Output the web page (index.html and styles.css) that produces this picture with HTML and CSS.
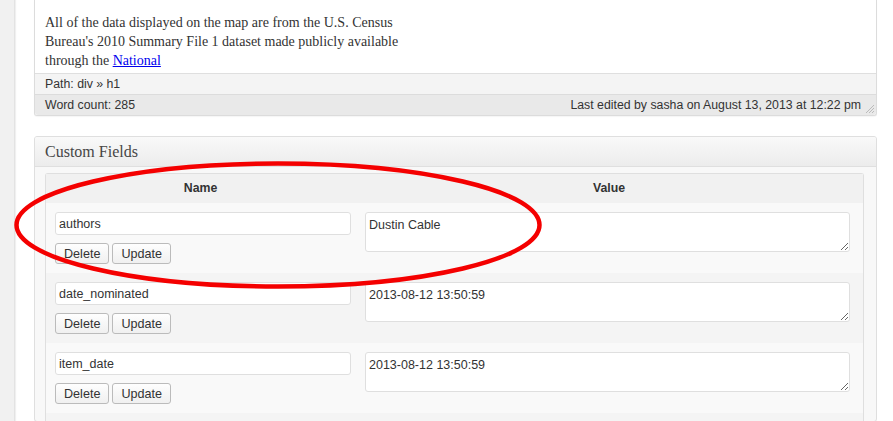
FILE: index.html
```html
<!DOCTYPE html>
<html lang="en">
<head>
<meta charset="utf-8">
<title>Edit Post – Custom Fields</title>
<link rel="stylesheet" href="styles.css">
</head>
<body>
<div class="layout">
  <aside class="sidebar"></aside>
  <main class="main">
    <div class="editor">
      <div class="editor-content">
        <p>All of the data displayed on the map are from the U.S. Census<br>Bureau's 2010 Summary File 1 dataset made publicly available<br>through the <a href="#">National</a></p>
      </div>
      <div class="path-bar">Path: div » h1</div>
      <div class="status-bar">
        <span>Word count: 285</span>
        <span class="last-edit">Last edited by sasha on August 13, 2013 at 12:22 pm</span>
        <svg class="grip" width="10" height="10" viewBox="0 0 10 10"><path d="M9 1L1 9M9 4L4 9M9 7L7 9" stroke="#bbb" stroke-width="1" fill="none"/></svg>
      </div>
    </div>

    <div class="postbox">
      <h3 class="postbox-title">Custom Fields</h3>
      <div class="postbox-inside">
        <div class="meta-table">
          <div class="meta-head">
            <div class="col-name">Name</div>
            <div class="col-value">Value</div>
          </div>
          <div class="meta-row">
            <div class="cell-name">
              <input class="field" type="text" value="authors">
              <div class="buttons"><button class="btn">Delete</button><button class="btn">Update</button></div>
            </div>
            <div class="cell-value"><textarea class="area">Dustin Cable</textarea></div>
          </div>
          <div class="meta-row alt">
            <div class="cell-name">
              <input class="field" type="text" value="date_nominated">
              <div class="buttons"><button class="btn">Delete</button><button class="btn">Update</button></div>
            </div>
            <div class="cell-value"><textarea class="area">2013-08-12 13:50:59</textarea></div>
          </div>
          <div class="meta-row">
            <div class="cell-name">
              <input class="field" type="text" value="item_date">
              <div class="buttons"><button class="btn">Delete</button><button class="btn">Update</button></div>
            </div>
            <div class="cell-value"><textarea class="area">2013-08-12 13:50:59</textarea></div>
          </div>
          <div class="meta-row alt tail"></div>
        </div>
      </div>
    </div>
  </main>
</div>
<svg class="annotation" width="893" height="421" viewBox="0 0 893 421">
  <ellipse cx="278" cy="225" rx="261.5" ry="61.5" fill="none" stroke="#f40000" stroke-width="4.5"/>
</svg>
</body>
</html>
```

FILE: styles.css
```css
html, body {
  margin: 0;
  padding: 0;
  background: #fff;
  height: 421px;
  overflow: hidden;
}

body {
  font-family: "Liberation Sans", Arial, sans-serif;
  font-size: 12px;
  color: #333;
  position: relative;
}

.layout {
  display: flex;
  height: 421px;
}

.sidebar {
  width: 14px;
  flex: 0 0 14px;
  background: #f1f1f1;
  border-right: 1px solid #e3e3e3;
  box-shadow: 1px 0 1px rgba(0, 0, 0, 0.06);
}

.main {
  flex: 1;
  padding: 0 16px 0 19px;
}

/* Editor */
.editor {
  border: 1px solid #dcdcdc;
  border-top: none;
  border-radius: 0 0 3px 3px;
  background: #fff;
  box-shadow: 0 1px 1px rgba(0, 0, 0, 0.04);
}

.editor-content {
  padding: 13px 10px 3px 10px;
}

.editor-content p {
  margin: 0;
  font-family: "Liberation Serif", "Times New Roman", serif;
  font-size: 14px;
  line-height: 19px;
  color: #333;
}

.editor-content a {
  color: #0000ee;
}

.path-bar {
  border-top: 1px solid #dfdfdf;
  background: #f4f4f4;
  height: 20px;
  line-height: 20px;
  padding: 0 10px;
  font-size: 12.3px;
  color: #333;
}

.status-bar {
  display: flex;
  align-items: center;
  border-top: 1px solid #dcdcdc;
  background: #e9e9e9;
  height: 20px;
  padding: 0 1px 0 10px;
  border-radius: 0 0 3px 3px;
  font-size: 12.3px;
}

.last-edit {
  margin-left: auto;
}

.grip {
  margin-left: 4px;
  align-self: flex-end;
  margin-bottom: 1px;
}

/* Postbox */
.postbox {
  margin-top: 20px;
  border: 1px solid #dfdfdf;
  border-radius: 3px;
  background: #f8f8f8;
  overflow: hidden;
}

.postbox-title {
  margin: 0;
  height: 29px;
  line-height: 30px;
  padding: 0 10px;
  font-family: "Liberation Serif", "Times New Roman", serif;
  font-weight: normal;
  font-size: 16px;
  color: #464646;
  background: linear-gradient(#f9f9f9, #ececec);
  border-bottom: 1px solid #dfdfdf;
}

.postbox-inside {
  padding: 6px 12px 0 10px;
}

.meta-table {
  border: 1px solid #dfdfdf;
  border-bottom: none;
  border-radius: 3px 3px 0 0;
}

.meta-head {
  display: grid;
  grid-template-columns: 309px 1fr;
  height: 29px;
  line-height: 29px;
  background: #f1f1f1;
  font-weight: bold;
  font-size: 12.3px;
  text-align: center;
  color: #333;
}

.meta-row {
  display: grid;
  grid-template-columns: 309px 1fr;
  height: 70px;
  background: #f9f9f9;
}

.meta-row.alt {
  background: #f4f4f4;
}

.meta-row.tail {
  height: 8px;
}

.cell-name {
  padding: 9px 0 0 9px;
}

.cell-value {
  padding: 9px 13px 0 10px;
}

.field {
  display: block;
  box-sizing: border-box;
  width: 296px;
  height: 23px;
  margin: 0;
  padding: 0 3px;
  border: 1px solid #dfdfdf;
  border-radius: 3px;
  background: #fff;
  font-family: "Liberation Sans", Arial, sans-serif;
  font-size: 12.5px;
  color: #333;
  outline: none;
}

.buttons {
  display: flex;
  gap: 3px;
  margin-top: 8px;
}

.btn {
  height: 21px;
  margin: 0;
  padding: 0 8px;
  border: 1px solid #bbb;
  border-radius: 3px;
  background: linear-gradient(#fefefe, #f0f0f0);
  font-family: "Liberation Sans", Arial, sans-serif;
  font-size: 12.6px;
  color: #333;
}

.area {
  display: block;
  box-sizing: border-box;
  width: 100%;
  height: 40px;
  margin: 0;
  padding: 4px 3px;
  border: 1px solid #dfdfdf;
  border-radius: 3px;
  background: #fff;
  font-family: "Liberation Sans", Arial, sans-serif;
  font-size: 12.5px;
  line-height: 16px;
  color: #333;
  resize: vertical;
  outline: none;
}

/* Annotation overlay */
.annotation {
  position: absolute;
  left: 0;
  top: 0;
  pointer-events: none;
}
```
